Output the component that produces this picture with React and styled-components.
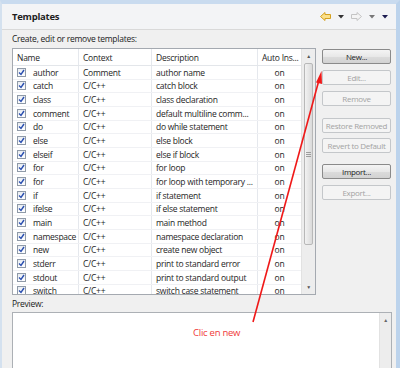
import React from "react";
import styled, { createGlobalStyle } from "styled-components";

const Global = createGlobalStyle`
  html, body { margin: 0; padding: 0; background: #f0f0f0; }
  body { font-family: "Open Sans", "Noto Sans", sans-serif; letter-spacing: -0.25px; }
`;

const Window = styled.div`
  position: relative;
  width: 400px;
  height: 368px;
  box-sizing: border-box;
  overflow: hidden;
  background: #f0f0f0;
  border-left: 2px solid #d4e1ef;
  border-right: 4px solid #bcd3ec;
  border-top: 4px solid #c9dbef;
`;

const Caption = styled.div`
  position: absolute;
  top: -4px;
  right: 4px;
  display: flex;
  gap: 2px;
`;

const CapBtn = styled.div`
  width: ${(p) => p.w}px;
  height: 4px;
  background: ${(p) => (p.close ? "#c75050" : "#dde4ec")};
  border: 1px solid ${(p) => (p.close ? "#a33" : "#9aa9bb")};
  border-top: none;
  box-sizing: border-box;
`;

const Header = styled.div`
  height: 25px;
  display: flex;
  align-items: center;
  justify-content: space-between;
  padding: 0 8px 0 10px;
  background: #f3f4f6;
  border-bottom: 1px solid #d9d9d9;
`;

const Title = styled.div`
  font-weight: 700;
  font-size: 9.5px;
  color: #1e1e1e;
`;

const Nav = styled.div`
  display: flex;
  align-items: center;
  gap: 7px;
`;

const Desc = styled.div`
  font-size: 8.5px;
  color: #222;
  padding: 3px 0 0 10px;
  height: 15px;
`;

const Main = styled.div`
  display: flex;
  gap: 6px;
  padding-left: 10px;
`;

const Table = styled.div`
  width: 304px;
  height: 247px;
  box-sizing: border-box;
  border: 1px solid #a4a9b0;
  background: #fff;
  display: flex;
  overflow: hidden;
`;

const Grid = styled.div`
  flex: 1;
  overflow: hidden;
`;

const Row = styled.div`
  display: grid;
  grid-template-columns: 66px 73px 106px 1fr;
  height: ${(p) => (p.head ? "17px" : "13.67px")};
  flex: none;
  border-bottom: 1px solid ${(p) => (p.head ? "#e3e6ea" : "#f0f1f4")};
  box-sizing: border-box;
  font-size: 8.5px;
  color: #1e1e1e;
`;

const Cell = styled.div`
  display: flex;
  align-items: center;
  justify-content: ${(p) => (p.center ? "center" : "flex-start")};
  padding-left: ${(p) => (p.center ? 0 : 4)}px;
  gap: 7px;
  border-right: 1px solid #e5e8ed;
  white-space: nowrap;
  overflow: hidden;
  &:last-child { border-right: none; }
`;

const Check = styled.span`
  width: 9px;
  height: 9px;
  box-sizing: border-box;
  border: 1px solid #8f9aa8;
  background: linear-gradient(#e9edf2, #fff);
  display: flex;
  align-items: center;
  justify-content: center;
  flex: none;
`;

const VScroll = styled.div`
  width: 13px;
  background: #ededed;
  border-left: 1px solid #e2e2e2;
  display: flex;
  flex-direction: column;
  align-items: center;
`;

const Arrow = styled.div`
  height: 14px;
  display: flex;
  align-items: center;
  justify-content: center;
  color: #555;
  font-size: 5px;
`;

const Thumb = styled.div`
  width: 9px;
  height: ${(p) => p.h}px;
  border: 1px solid #b8b8b8;
  border-radius: 2px;
  background: linear-gradient(90deg, #f2f2f2, #dadada);
  box-sizing: border-box;
  display: flex;
  align-items: center;
  justify-content: center;
`;

const Spacer = styled.div`
  flex: 1;
`;

const Buttons = styled.div`
  width: 69px;
  display: flex;
  flex-direction: column;
  padding-top: 1px;
`;

const Btn = styled.div`
  height: 15px;
  box-sizing: border-box;
  margin-top: ${(p) => p.gap || 0}px;
  border: 1px solid ${(p) => (p.off ? "#c4c7ca" : "#8a8a8a")};
  border-radius: 2px;
  background: ${(p) =>
    p.off ? "#f4f4f4" : "linear-gradient(#f4f4f4, #e8e8e8 50%, #dcdcdc 51%, #d2d2d2)"};
  color: ${(p) => (p.off ? "#a3a3a3" : "#1e1e1e")};
  font-size: 8px;
  letter-spacing: -0.3px;
  display: flex;
  align-items: center;
  justify-content: center;
  white-space: nowrap;
`;

const PreviewLabel = styled.div`
  font-size: 8.5px;
  color: #222;
  padding: 3px 0 0 10px;
  height: 14px;
`;

const Preview = styled.div`
  margin-left: 10px;
  width: 380px;
  height: 80px;
  box-sizing: border-box;
  border: 1px solid #acb0b5;
  background: #fff;
  display: flex;
  justify-content: flex-end;
`;

const PScroll = styled.div`
  width: 11px;
  background: #ededed;
  border-left: 1px solid #e2e2e2;
  display: flex;
  justify-content: center;
  color: #666;
  font-size: 5px;
  padding-top: 4px;
`;

const Overlay = styled.svg`
  position: absolute;
  left: -2px;
  top: -4px;
  pointer-events: none;
`;

const Note = styled.div`
  position: absolute;
  left: 191px;
  top: 322px;
  font-size: 9.5px;
  color: #f03a3a;
`;

const rows = [
  ["author", "Comment", "author name"],
  ["catch", "C/C++", "catch block"],
  ["class", "C/C++", "class declaration"],
  ["comment", "C/C++", "default multiline comm..."],
  ["do", "C/C++", "do while statement"],
  ["else", "C/C++", "else block"],
  ["elseif", "C/C++", "else if block"],
  ["for", "C/C++", "for loop"],
  ["for", "C/C++", "for loop with temporary ..."],
  ["if", "C/C++", "if statement"],
  ["ifelse", "C/C++", "if else statement"],
  ["main", "C/C++", "main method"],
  ["namespace", "C/C++", "namespace declaration"],
  ["new", "C/C++", "create new object"],
  ["stderr", "C/C++", "print to standard error"],
  ["stdout", "C/C++", "print to standard output"],
  ["switch", "C/C++", "switch case statement"],
];

const Tri = ({ color = "#333" }) => (
  <svg width="6" height="4" viewBox="0 0 6 4">
    <path d="M0 0h6L3 3.5z" fill={color} />
  </svg>
);

const NavArrow = ({ dir, fill, stroke }) => (
  <svg width="11" height="9" viewBox="0 0 11 9">
    <path
      d={dir === "left" ? "M0.5 4.5L5 0.5V2.5H10.5V6.5H5V8.5Z" : "M10.5 4.5L6 0.5V2.5H0.5V6.5H6V8.5Z"}
      fill={fill}
      stroke={stroke}
      strokeWidth="1"
      strokeLinejoin="round"
    />
  </svg>
);

const CheckMark = () => (
  <svg width="7" height="7" viewBox="0 0 7 7">
    <path d="M1 3.5L3 5.5L6 1" fill="none" stroke="#2a4fb0" strokeWidth="1.4" />
  </svg>
);

export default function App() {
  return (
    <>
      <Global />
      <Window>
        <Caption>
          <CapBtn w={22} />
          <CapBtn w={14} />
          <CapBtn w={26} close />
        </Caption>
        <Header>
          <Title>Templates</Title>
          <Nav>
            <NavArrow dir="left" fill="#fbe08a" stroke="#d4a020" />
            <Tri />
            <NavArrow dir="right" fill="#f4f4f4" stroke="#c4c4c4" />
            <Tri color="#777" />
            <Tri color="#1c1c50" />
          </Nav>
        </Header>
        <Desc>Create, edit or remove templates:</Desc>
        <Main>
          <Table>
            <Grid>
              <Row head>
                <Cell>Name</Cell>
                <Cell>Context</Cell>
                <Cell>Description</Cell>
                <Cell>Auto Ins...</Cell>
              </Row>
              {rows.map(([name, ctx, desc], i) => (
                <Row key={i}>
                  <Cell>
                    <Check>
                      <CheckMark />
                    </Check>
                    {name}
                  </Cell>
                  <Cell>{ctx}</Cell>
                  <Cell>{desc}</Cell>
                  <Cell center>on</Cell>
                </Row>
              ))}
            </Grid>
            <VScroll>
              <Arrow>▲</Arrow>
              <Thumb h={182}>
                <svg width="5" height="5" viewBox="0 0 5 5">
                  <path d="M0 0.5h5M0 2.5h5M0 4.5h5" stroke="#8a8a8a" strokeWidth="0.8" />
                </svg>
              </Thumb>
              <Spacer />
              <Arrow>▼</Arrow>
            </VScroll>
          </Table>
          <Buttons>
            <Btn>New...</Btn>
            <Btn off gap={6}>Edit...</Btn>
            <Btn off gap={6}>Remove</Btn>
            <Btn off gap={12}>Restore Removed</Btn>
            <Btn off gap={5}>Revert to Default</Btn>
            <Btn gap={11}>Import...</Btn>
            <Btn off gap={6}>Export...</Btn>
          </Buttons>
        </Main>
        <PreviewLabel>Preview:</PreviewLabel>
        <Preview>
          <PScroll>▲</PScroll>
        </Preview>
        <Note>Clic en new</Note>
        <Overlay width="400" height="368" viewBox="0 0 400 368">
          <line x1="253" y1="322" x2="319" y2="80" stroke="#f01818" strokeWidth="1.6" />
          <path d="M321.5 71L322 84L316 82.5Z" fill="#f01818" />
        </Overlay>
      </Window>
    </>
  );
}
